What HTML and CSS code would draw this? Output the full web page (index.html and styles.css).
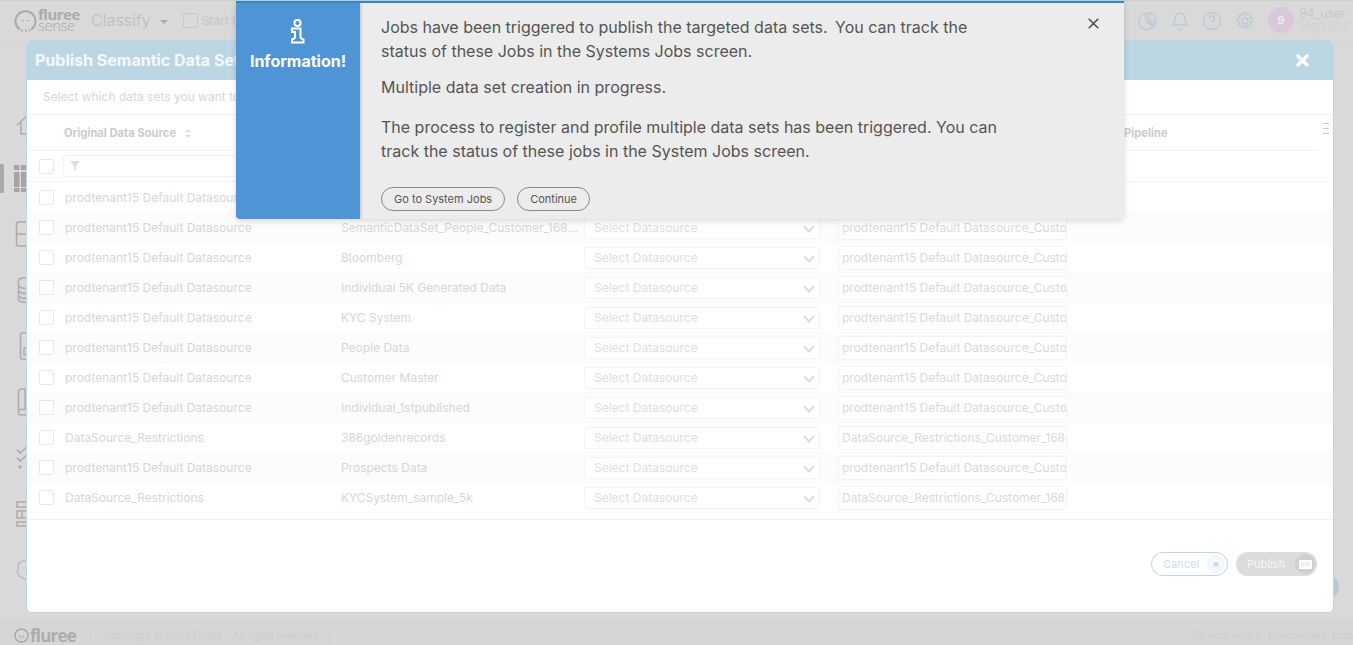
FILE: index.html
```html
<!DOCTYPE html>
<html lang="en">
<head>
<meta charset="utf-8">
<title>Publish Semantic Data Sets</title>
<link rel="stylesheet" href="styles.css">
</head>
<body>
<div class="app">
  <header class="topbar">
    <div class="brand">
      <svg class="brand-mark" width="23" height="23" viewBox="0 0 23 23" fill="none" stroke="#a9a9a9" stroke-width="2"><path d="M6 20.500A10 10 0 1 1 17 20.500"/><path d="M8 11a1 1 0 0 0 2 0M13 11a1 1 0 0 0 2 0" stroke-width="1"/><path d="M7 21.500h9" stroke-dasharray="2 2"/></svg>
      <div class="brand-text"><span class="brand-top">fluree</span><span class="brand-bottom">sense</span></div>
    </div>
    <div class="app-name">Classify</div>
    <div class="caret"></div>
    <div class="start"><span class="start-box"></span><span>Start by</span></div>
    <div class="spacer"></div>
    <div class="top-icons">
      <svg width="20" height="20" viewBox="0 0 20 20" fill="none" stroke="#bccad3" stroke-width="1.400"><path d="M8.500 2.500a8 8 0 1 0 6.500 13L8.500 11z"/><path d="M11 1.500a7.500 7.500 0 0 1 7 7.500h-7z"/><path d="M11 11.500h7.500l-2.500 3.500z"/></svg>
      <svg width="18" height="20" viewBox="0 0 18 20" fill="none" stroke="#bccad3" stroke-width="1.400"><path d="M9 2a5 5 0 0 1 5 5c0 5 2.500 7 2.500 7h-15S4 12 4 7a5 5 0 0 1 5-5z"/><path d="M7 17a2 2 0 0 0 4 0"/></svg>
      <svg width="20" height="20" viewBox="0 0 20 20" fill="none" stroke="#bccad3" stroke-width="1.400"><circle cx="10" cy="10" r="8.500"/><path d="M7.500 7.500a2.500 2.500 0 1 1 3.500 2.300c-.7.400-1 .9-1 1.700"/><path d="M10 14v1"/></svg>
      <svg width="20" height="20" viewBox="0 0 20 20" fill="none" stroke="#bccad3" stroke-width="1.400"><circle cx="10" cy="10" r="3"/><path d="M8.500 1.500h3l.5 2.500 2-1 2.200 2.200-1.200 2 2.500.6v3l-2.500.6 1.200 2-2.200 2.200-2-1.200-.5 2.600h-3l-.6-2.600-2 1.200-2.200-2.200 1.200-2-2.400-.6v-3l2.400-.6-1.200-2L5.900 3l2 1z"/></svg>
    </div>
    <div class="avatar">9</div>
    <div class="user"><span>94_user</span><span class="signout">Sign Out</span></div>
  </header>

  <div class="main">
    <aside class="sidebar">
      <span class="side-toggle"></span>
      <div class="slot slot-first"><svg width="27" height="22" viewBox="0 0 27 22" fill="none" stroke="#acacac" stroke-width="1.500"><path d="M17 11 27 2M21 8v12h6"/></svg></div>
      <div class="slot"><svg width="27" height="28" viewBox="0 0 27 28" fill="#a9a3a6"><rect x="14" y="1" width="5.500" height="5"/><rect x="21" y="1" width="6" height="5"/><rect x="14" y="8" width="5.500" height="15"/><rect x="21" y="8" width="6" height="15"/><rect x="14" y="24" width="5.500" height="4"/><rect x="21" y="24" width="6" height="4"/></svg></div>
      <div class="slot"><svg width="27" height="26" viewBox="0 0 27 26" fill="none" stroke="#b3a8a8" stroke-width="1.500"><path d="M27 1H18a1.500 1.500 0 0 0-1.500 1.500v21A1.500 1.500 0 0 0 18 25h9M17 13h10"/></svg></div>
      <div class="slot"><svg width="27" height="28" viewBox="0 0 27 28" fill="none" stroke="#adadad" stroke-width="1.500"><path d="M27 2c-4-.5-8.500.5-8.500 2.500v19C18.500 25.500 23 26.500 27 26M19 10c1 1.500 4.500 2.500 8 2.500M19 15c1 1.500 4.500 2.500 8 2.500M19 20c1 1.500 4.500 2.500 8 2.500"/></svg></div>
      <div class="slot"><svg width="27" height="28" viewBox="0 0 27 28" fill="none" stroke="#adadad" stroke-width="1.500"><path d="M27 1h-5a1.500 1.500 0 0 0-1.500 1.500v23A1.500 1.500 0 0 0 22 27h5"/><path d="M24 16v7h3M24 16h3"/></svg></div>
      <div class="slot"><svg width="27" height="28" viewBox="0 0 27 28" fill="none" stroke="#adadad" stroke-width="1.500"><path d="M25 1h-3c-2 0-3.500 1.500-3.500 3.500v20c0 1.500 1 2.500 2.500 2.500h6M18.500 24c0-1.500 1-2.500 2.500-2.500h6M25 1v20"/></svg></div>
      <div class="slot"><svg width="27" height="24" viewBox="0 0 27 24" fill="none" stroke="#adadad" stroke-width="1.700"><path d="M17 4l3.500 3L26 1.500M17 12l3.500 3L26 9.500"/><circle cx="20" cy="21" r="1.700" fill="#adadad" stroke="none"/></svg></div>
      <div class="slot"><svg width="27" height="26" viewBox="0 0 27 26" fill="none" stroke="#b3a8a8" stroke-width="1.500"><path d="M27 1H17v5h10M27 10h-10v7h10M27 21H17v4h10"/><path d="M22 10v7"/></svg></div>
      <div class="slot"><svg width="27" height="22" viewBox="0 0 27 22" fill="none" stroke="#bdbdbd" stroke-width="1.500"><path d="M27 2h-4c-1 0-1 1.500-2.500 1.500S18 5 18 7c0 1 1 2 0 3.500s-1 3 0 4 .5 2.500 2 3.500 2-.5 3 1 2 1.500 4 1.500"/></svg></div>
    </aside>
    <div class="content"><span class="help-dot"></span></div>
  </div>

  <footer class="footer">
    <div class="foot-brand">
      <svg width="15" height="15" viewBox="0 0 15 15" fill="none" stroke="#aaa" stroke-width="1.500"><circle cx="7.500" cy="7.500" r="6.500"/><path d="M5 7a1 1 0 0 0 5 0" stroke-width="1"/></svg>
      <span>fluree</span>
    </div>
    <span class="foot-sep"></span>
    <span class="foot-copy">Copyright © 2023 Fluree - All rights reserved</span>
    <span class="foot-sep"></span>
    <span class="spacer"></span>
    <span class="foot-version">Version: v0.2.1 &nbsp; Environment: fsqa</span>
  </footer>
</div>

<section class="modal">
  <div class="modal-head">
    <span class="modal-title">Publish Semantic Data Sets</span>
    <svg class="modal-close" width="13" height="13" viewBox="0 0 13 13" stroke="#fff" stroke-width="3.400" stroke-linecap="round"><path d="M2 2l9 9M11 2l-9 9"/></svg>
  </div>
  <p class="modal-sub">Select which data sets you want to publish</p>
  <div class="table">
    <div class="thead">
      <span></span>
      <span class="th">Original Data Source <i class="sort"></i></span>
      <span class="th">Pipeline</span>
      <span class="col-menu"></span>
    </div>
    <div class="filter-row">
      <span class="cb"></span>
      <div class="filter-box"><svg width="10" height="10" viewBox="0 0 10 10" fill="#dfdfdf"><path d="M0 0h10L6 5v5L4 8.500V5z"/></svg></div>
    </div>
    <div class="row"><span class="cb"></span><span class="c1">prodtenant15 Default Datasource</span><span class="c2"></span><span class="sel">Select Datasource</span><span class="inp">prodtenant15 Default Datasource_Customer_168</span></div>
    <div class="row alt"><span class="cb"></span><span class="c1">prodtenant15 Default Datasource</span><span class="c2">SemanticDataSet_People_Customer_1686...</span><span class="sel">Select Datasource</span><span class="inp">prodtenant15 Default Datasource_Customer_168</span></div>
    <div class="row"><span class="cb"></span><span class="c1">prodtenant15 Default Datasource</span><span class="c2">Bloomberg</span><span class="sel">Select Datasource</span><span class="inp">prodtenant15 Default Datasource_Customer_168</span></div>
    <div class="row alt"><span class="cb"></span><span class="c1">prodtenant15 Default Datasource</span><span class="c2">Individual 5K Generated Data</span><span class="sel">Select Datasource</span><span class="inp">prodtenant15 Default Datasource_Customer_168</span></div>
    <div class="row"><span class="cb"></span><span class="c1">prodtenant15 Default Datasource</span><span class="c2">KYC System</span><span class="sel">Select Datasource</span><span class="inp">prodtenant15 Default Datasource_Customer_168</span></div>
    <div class="row alt"><span class="cb"></span><span class="c1">prodtenant15 Default Datasource</span><span class="c2">People Data</span><span class="sel">Select Datasource</span><span class="inp">prodtenant15 Default Datasource_Customer_168</span></div>
    <div class="row"><span class="cb"></span><span class="c1">prodtenant15 Default Datasource</span><span class="c2">Customer Master</span><span class="sel">Select Datasource</span><span class="inp">prodtenant15 Default Datasource_Customer_168</span></div>
    <div class="row alt"><span class="cb"></span><span class="c1">prodtenant15 Default Datasource</span><span class="c2">Individual_1stpublished</span><span class="sel">Select Datasource</span><span class="inp">prodtenant15 Default Datasource_Customer_168</span></div>
    <div class="row"><span class="cb"></span><span class="c1">DataSource_Restrictions</span><span class="c2">386goldenrecords</span><span class="sel">Select Datasource</span><span class="inp">DataSource_Restrictions_Customer_1686</span></div>
    <div class="row alt"><span class="cb"></span><span class="c1">prodtenant15 Default Datasource</span><span class="c2">Prospects Data</span><span class="sel">Select Datasource</span><span class="inp">prodtenant15 Default Datasource_Customer_168</span></div>
    <div class="row"><span class="cb"></span><span class="c1">DataSource_Restrictions</span><span class="c2">KYCSystem_sample_5k</span><span class="sel">Select Datasource</span><span class="inp">DataSource_Restrictions_Customer_1686</span></div>
  </div>
  <div class="modal-foot">
    <button class="btn-cancel">Cancel<span class="btn-x">×</span></button>
    <button class="btn-publish">Publish<span class="btn-ico"><svg width="13" height="9" viewBox="0 0 13 9"><rect width="13" height="9" rx="1" fill="#fff"/><path d="M2 3h3v3H2zM7 3h4M7 5h4" stroke="#dcdcdc" fill="none"/></svg></span></button>
  </div>
</section>

<section class="alert">
  <div class="alert-side">
    <svg class="alert-icon" width="14" height="25" viewBox="0 0 14 25" fill="none" stroke="#fff" stroke-width="2"><circle cx="6.500" cy="4" r="3.100"/><path d="M1 9.500h8.500V18c0 1.500 1.500 2 3 2.500v3H1v-3c2-.5 3-1 3-2.500v-5H1z"/></svg>
    <strong>Information!</strong>
  </div>
  <div class="alert-body">
    <p class="msg">Jobs have been triggered to publish the targeted data sets. <span class="sentence">You can track the</span> status of these Jobs in the Systems Jobs screen.</p>
    <p class="msg msg-mid">Multiple data set creation in progress.</p>
    <p class="msg msg-wide">The process to register and profile multiple data sets has been triggered. You can track the status of these jobs in the System Jobs screen.</p>
    <div class="alert-actions">
      <button class="pill">Go to System Jobs</button>
      <button class="pill">Continue</button>
    </div>
    <svg class="alert-close" width="11" height="11" viewBox="0 0 11 11" stroke="#4a4a4a" stroke-width="1.500"><path d="M.7.700l9.600 9.600M10.300.700.7 10.300"/></svg>
  </div>
</section>
</body>
</html>
```
FILE: styles.css
```css
* { box-sizing: border-box; }
html, body { margin: 0; height: 100%; overflow: hidden; }
body { font-family: Inter, "Liberation Sans", sans-serif; background: #d9d9d9; position: relative; }
.app { height: 645px; display: flex; flex-direction: column; border-top: 1px solid #cfcfcf; }
.topbar { height: 40px; display: flex; align-items: center; padding: 0 5px 0 14px; border-bottom: 1px solid #d4d4d4; flex: none; }
.brand { display: flex; align-items: center; gap: 1px; width: 77px; }
.brand-mark { flex: none; }
.brand-text { display: flex; flex-direction: column; margin-top: -2px; line-height: 11px; font-family: "Open Sans", sans-serif; color: #ababab; }
.brand-top { font-size: 15px; font-weight: 700; letter-spacing: -.5px; }
.brand-bottom { font-size: 15px; font-weight: 300; letter-spacing: -.5px; }
.app-name { margin-top: -2px; font-size: 16px; font-weight: 300; letter-spacing: .1px; color: #bcbcbc; }
.caret { margin: 2px 0 0 9px; border: 4px solid transparent; border-top: 4px solid #ababab; border-bottom: 0; }
.start { margin-left: 15px; display: flex; align-items: center; gap: 4px; font-size: 12px; color: #c6c6c6; width: 100px; }
.start-box { width: 15px; height: 15px; border: 1px solid #c8c8c8; border-radius: 2px; }
.spacer { flex: 1; }
.top-icons { display: flex; align-items: center; gap: 13px; margin-right: 13px; }
.avatar { width: 26px; height: 26px; margin-top: -2px; border-radius: 50%; background: #d8c8d9; color: #eee; font-size: 11px; font-weight: 600; display: flex; align-items: center; justify-content: center; }
.user { margin: -2px 0 0 5px; width: 49px; display: flex; flex-direction: column; font-size: 12.600px; font-weight: 300; line-height: 12px; color: #c4c4c4; white-space: nowrap; }
.signout { color: #d0d0d0; }
.main { flex: 1; display: flex; min-height: 0; }
.sidebar { width: 27px; position: relative; overflow: hidden; display: flex; flex-direction: column; padding-top: 59px; flex: none; }
.slot { height: 56px; flex: none; display: flex; align-items: center; }
.slot-first { height: 50px; }
.side-toggle { position: absolute; left: 0; top: 123px; width: 4px; height: 29px; background: #a9a9a9; border-radius: 0 2px 2px 0; }
.content { flex: 1; position: relative; }
.help-dot { position: absolute; right: 14px; top: 534px; width: 24px; height: 24px; border-radius: 50%; background: #b3cbd8; }
.footer { height: 28px; flex: none; display: flex; align-items: center; padding: 8px 0 0 14px; background: #d6d6d6; font-size: 10px; color: #cdcdcd; }
.foot-brand { display: flex; align-items: center; gap: 1px; font-family: "Open Sans", sans-serif; font-size: 17px; font-weight: 700; color: #adadad; letter-spacing: -.8px; width: 76px; }
.foot-sep { width: 1px; height: 14px; background: #cfcfcf; }
.foot-copy { margin: 0 10px 0 13px; }
.foot-version { white-space: nowrap; }

.modal { position: absolute; left: 26px; top: 40px; width: 1308px; height: 573px; background: #fff; border: 1px solid #bcd6e3; border-radius: 6px; display: flex; flex-direction: column; overflow: hidden; }
.modal-head { height: 40px; margin: -1px -1px 0; flex: none; background: #bcd6e3; display: flex; align-items: center; justify-content: space-between; padding: 0 25px 0 9px; }
.modal-title { font-size: 16px; font-weight: 700; color: #f3f8fa; white-space: nowrap; }
.modal-sub { margin: 0; height: 35px; flex: none; padding: 9px 0 0 16px; font-size: 12px; color: #d6d6d6; border-bottom: 1px solid #f1f1f1; }
.table { margin: 0; flex: none; border-bottom: 1px solid #f1f1f1; padding-bottom: 6px; }
.thead { height: 36px; display: grid; grid-template-columns: 37px 1060px 1fr 6px; align-items: center; margin-right: 14px; border-bottom: 1px solid #f4f4f4; }
.th { font-size: 11.200px; font-weight: 700; color: #cbcbcb; white-space: nowrap; display: block; }
.sort { display: inline-block; position: relative; width: 6px; height: 9px; margin-left: 6px; vertical-align: -1px; }
.sort::before, .sort::after { content: ""; position: absolute; left: 0; border: 3px solid transparent; }
.sort::before { top: 0; border-top: 0; border-bottom: 3px solid #dedede; }
.sort::after { bottom: 0; border-bottom: 0; border-top: 3px solid #dedede; }
.col-menu { width: 6px; height: 11px; margin: -8px -10px 0 10px; border-top: 1px solid #c8c8c8; border-bottom: 1px solid #c8c8c8; background: linear-gradient(#c8c8c8, #c8c8c8) center / 100% 1px no-repeat; }
.filter-row { height: 31px; margin: 0 5px 1px 0; display: flex; align-items: center; gap: 9px; padding-left: 12px; border-bottom: 1px solid #f4f4f4; }
.cb { width: 15px; height: 15px; border: 1px solid #e8e8e8; border-radius: 2px; background: #fff; flex: none; }
.filter-box { width: 260px; height: 22px; border: 1px solid #f2f2f2; border-radius: 3px; display: flex; align-items: center; padding-left: 6px; }
.row { height: 30px; display: grid; grid-template-columns: 26px 276px 243px 254px 229px; align-items: center; padding-left: 12px; font-size: 12px; color: #d6d6d6; border-bottom: 1px solid #fafafa; white-space: nowrap; }
.row.alt { background: #fcfcfc; }
.c1 { overflow: hidden; }
.c2 { overflow: hidden; text-overflow: ellipsis; width: 240px; }
.sel { width: 236px; height: 22px; border: 1px solid #f3f3f3; border-radius: 3px; background: #fff; padding: 0 9px; line-height: 20px; color: #dedede; position: relative; }
.sel::after { content: ""; position: absolute; right: 6px; top: 5px; width: 6px; height: 6px; border-right: 2px solid #dcdcdc; border-bottom: 2px solid #dcdcdc; transform: rotate(45deg); }
.inp { width: 229px; height: 24px; border: 1px solid #f3f3f3; border-radius: 3px; background: #fff; padding: 0 3px; line-height: 22px; overflow: hidden; color: #d9d9d9; }
.modal-foot { display: flex; justify-content: flex-end; gap: 8px; padding: 32px 16px 0 0; }
.btn-cancel, .btn-publish { height: 24px; border-radius: 12px; font: 11px Inter, sans-serif; display: flex; align-items: center; justify-content: space-between; padding: 0 2px 0 11px; }
.btn-cancel { width: 77px; border: 1px solid #bcd6e3; background: #fff; color: #c9dfe9; }
.btn-x { width: 18px; height: 18px; border-radius: 50%; background: #f1f7fa; color: #a9c8d8; font-size: 11px; line-height: 18px; }
.btn-publish { width: 81px; border: 0; background: #dcdcdc; color: #f5f5f5; }
.btn-ico { width: 20px; height: 20px; border-radius: 50%; background: #cfcfcf; display: flex; align-items: center; justify-content: center; }

.alert { position: absolute; left: 236px; top: 1px; width: 888px; height: 218px; display: flex; background: #ececec; border-top: 2px solid #2f8ac2; border-radius: 0 0 4px 4px; box-shadow: 0 2px 6px rgba(0,0,0,.15); overflow: hidden; }
.alert-side { width: 124px; flex: none; background: #4f95d6; color: #fff; display: flex; flex-direction: column; align-items: center; padding-top: 16px; box-shadow: 1px 0 3px rgba(0,0,0,.2); }
.alert-side strong { font-size: 16px; font-weight: 700; line-height: 19px; margin-top: 8px; white-space: nowrap; }
.alert-icon { flex: none; }
.alert-body { flex: 1; position: relative; padding: 12px 0 0 21px; }
.msg { margin: 0; width: 610px; font-size: 16px; line-height: 24px; color: #555; }
.sentence { margin-left: 3px; }
.msg-mid { margin-top: 12px; }
.msg-wide { margin-top: 16px; width: 640px; }
.alert-actions { display: flex; gap: 12px; margin-top: 24px; }
.pill { height: 24px; padding: 0 12px; border: 1px solid #888; border-radius: 12px; background: transparent; font: 11px Inter, sans-serif; color: #555; }
.alert-close { position: absolute; left: 728px; top: 15px; }
```
